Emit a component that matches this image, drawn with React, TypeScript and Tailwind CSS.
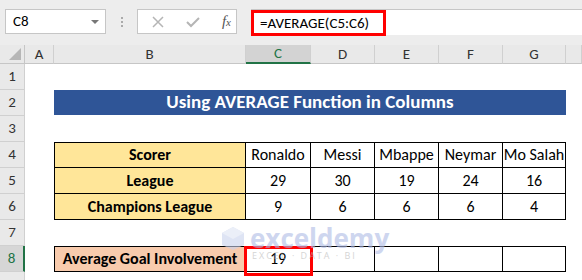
import React from "react";

const cols = ["A", "B", "C", "D", "E", "F", "G", ""];
const players = ["Ronaldo", "Messi", "Mbappe", "Neymar", "Mo Salah"];
const league = [29, 30, 19, 24, 16];
const champions = [9, 6, 6, 6, 4];

const font = { fontFamily: "Calibri, Carlito, 'Open Sans', sans-serif" };

function RowHead({ n, active }: { n?: number; active?: boolean }) {
  return (
    <div
      className={`flex items-center justify-center border-b border-r border-[#d0d0d0] text-[15px] text-[#333] ${
        active ? "bg-[#d6d6d6] border-r-2 border-r-[#217346] text-[#217346]" : "bg-[#e9e9e9]"
      }`}
    >
      {n}
    </div>
  );
}

function Cell({ children, className = "" }: { children?: React.ReactNode; className?: string }) {
  return (
    <div className={`flex items-center justify-center text-[16px] text-black ${className}`}>
      {children}
    </div>
  );
}

export default function App() {
  return (
    <div className="w-[582px] h-[280px] overflow-hidden bg-white relative" style={font}>
      {/* formula bar */}
      <div className="h-[45px] bg-[#ededed] flex items-start pt-[9px] pl-[5px]">
        <div className="w-[101px] h-[25px] bg-white border border-[#c6c6c6] flex items-center justify-between pl-[7px] pr-[6px] text-[15px] text-black">
          <span>C8</span>
          <span className="w-0 h-0 border-l-[4px] border-r-[4px] border-t-[4px] border-l-transparent border-r-transparent border-t-[#777]" />
        </div>
        <div className="w-[31px] h-[25px] flex flex-col items-center justify-center gap-[2px]">
          <span className="w-[2px] h-[2px] bg-[#aaa]" />
          <span className="w-[2px] h-[2px] bg-[#aaa]" />
          <span className="w-[2px] h-[2px] bg-[#aaa]" />
        </div>
        <div className="w-[100px] h-[25px] bg-white border border-[#c6c6c6] flex items-center justify-between pl-[14px] pr-[5px]">
          <svg width="12" height="12" viewBox="0 0 12 12">
            <path d="M1 1 L11 11 M11 1 L1 11" stroke="#b5b5b5" strokeWidth="1.5" />
          </svg>
          <svg width="14" height="12" viewBox="0 0 14 12">
            <path d="M1 6 L5 10 L13 2" stroke="#b5b5b5" strokeWidth="2" fill="none" />
          </svg>
          <span className="text-[15px] italic text-[#555]" style={{ fontFamily: "'Liberation Serif', serif" }}>
            f<span className="text-[11px]">x</span>
          </span>
        </div>
        <div className="ml-[14px] flex-1 h-[26px] bg-white border-t border-[#c6c6c6] relative">
          <div className="absolute left-0 top-0 w-[135px] h-[26px] border-[3px] border-[#ff0000]" />
          <span className="absolute left-[9px] top-[2px] text-[15px] text-black">=AVERAGE(C5:C6)</span>
        </div>
      </div>

      {/* sheet grid */}
      <div className="grid grid-cols-[25px_29px_192px_65px_64px_64px_64px_63px_16px] grid-rows-[19px_26px_26px_26px_26px_26px_26px_26px_26px_26px]">
        {/* header row */}
        <div className="bg-[#e9e9e9] border-b border-r border-[#c6c6c6] relative">
          <div className="absolute right-[3px] bottom-[3px] w-0 h-0 border-b-[12px] border-l-[12px] border-b-[#b6b6b6] border-l-transparent" />
        </div>
        {cols.map((c, i) => (
          <div
            key={i}
            className={`flex items-center justify-center text-[15px] text-[#333] border-r border-[#d0d0d0] ${
              c === "C"
                ? "bg-[#d3d3d3] border-b-2 border-b-[#217346] text-[#217346]"
                : "bg-[#e9e9e9] border-b border-b-[#c6c6c6]"
            }`}
          >
            {c}
          </div>
        ))}

        {/* row 1 */}
        <RowHead n={1} />
        <div className="col-span-8" />

        {/* row 2 */}
        <RowHead n={2} />
        <div />
        <div className="col-span-6 bg-[#2f5597] flex items-center justify-center text-white font-bold text-[19px] mb-[1px]">
          Using AVERAGE Function in Columns
        </div>
        <div />

        {/* row 3 */}
        <RowHead n={3} />
        <div className="col-span-8" />

        {/* row 4 */}
        <RowHead n={4} />
        <div />
        <Cell className="bg-[#ffe699] font-bold border border-black">Scorer</Cell>
        {players.map((p) => (
          <Cell key={p} className="border-t border-r border-b border-black">
            {p}
          </Cell>
        ))}
        <div />

        {/* row 5 */}
        <RowHead n={5} />
        <div />
        <Cell className="bg-[#ffe699] font-bold border-l border-r border-b border-black">League</Cell>
        {league.map((v, i) => (
          <Cell key={i} className="border-r border-b border-black">
            {v}
          </Cell>
        ))}
        <div />

        {/* row 6 */}
        <RowHead n={6} />
        <div />
        <Cell className="bg-[#ffe699] font-bold border-l border-r border-b border-black">Champions League</Cell>
        {champions.map((v, i) => (
          <Cell key={i} className="border-r border-b border-black">
            {v}
          </Cell>
        ))}
        <div />

        {/* row 7 */}
        <RowHead n={7} />
        <div className="col-span-8" />

        {/* row 8 */}
        <RowHead n={8} active />
        <div />
        <Cell className="bg-[#f8cbad] font-bold border border-black">Average Goal Involvement</Cell>
        <Cell className="border-t border-r border-b border-black relative">
          19
          <div className="absolute -left-[2px] -top-[1px] w-[69px] h-[30px] border-[3px] border-[#ff0000]" />
        </Cell>
        <Cell className="border-t border-r border-b border-black" />
        <Cell className="border-t border-r border-b border-black" />
        <Cell className="border-t border-r border-b border-black" />
        <Cell className="border-t border-r border-b border-black" />
        <div />

        {/* row 9 */}
        <RowHead />
        <div className="col-span-8" />
      </div>

      {/* watermark */}
      <div className="absolute left-[220px] top-[225px] flex items-start gap-[4px] opacity-60 pointer-events-none">
        <svg width="26" height="26" viewBox="0 0 26 26">
          <path d="M13 2 L24 8 L24 20 L13 25 L2 20 L2 8 Z" fill="#c9d3ee" />
          <path d="M13 2 L24 8 L13 14 L2 8 Z" fill="#dfe5f5" />
        </svg>
        <div className="flex flex-col leading-none">
          <span className="text-[26px] font-bold text-[#aebbe6]" style={{ fontFamily: "'Open Sans', sans-serif" }}>
            exceldemy
          </span>
          <span className="text-[9px] tracking-[2px] text-[#b9b9b9] ml-[2px]" style={{ fontFamily: "'Open Sans', sans-serif" }}>
            EXCEL · DATA · BI
          </span>
        </div>
      </div>
    </div>
  );
}
